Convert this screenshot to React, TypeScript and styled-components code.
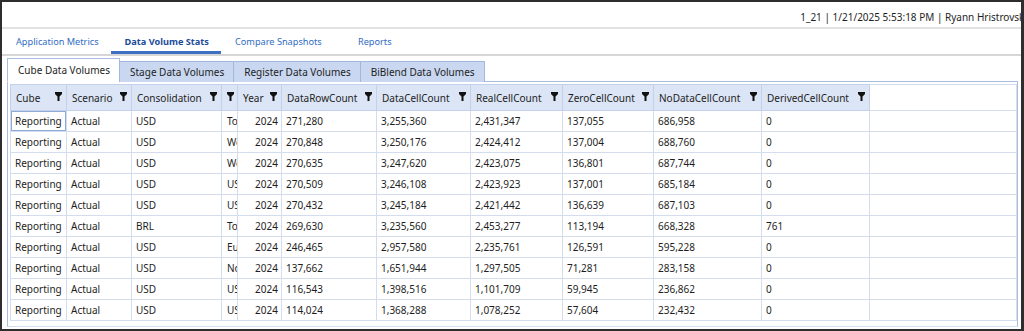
import React from 'react';
import styled, { createGlobalStyle } from 'styled-components';

const GlobalStyle = createGlobalStyle`
  html, body {
    margin: 0;
    padding: 0;
    background: #ffffff;
  }
  body {
    font-family: 'Noto Sans', 'Open Sans', Arial, sans-serif;
    font-size: 10px;
    color: #1e1e1e;
  }
`;

type Row = string[];

const columns = [
  { name: 'Cube', width: 56 },
  { name: 'Scenario', width: 65 },
  { name: 'Consolidation', width: 90 },
  { name: '', width: 16 },
  { name: 'Year', width: 44 },
  { name: 'DataRowCount', width: 95 },
  { name: 'DataCellCount', width: 94 },
  { name: 'RealCellCount', width: 92 },
  { name: 'ZeroCellCount', width: 91 },
  { name: 'NoDataCellCount', width: 108 },
  { name: 'DerivedCellCount', width: 108 },
];

const rows: Row[] = [
  ['Reporting', 'Actual', 'USD', 'Total', '2024', '271,280', '3,255,360', '2,431,347', '137,055', '686,958', '0'],
  ['Reporting', 'Actual', 'USD', 'West', '2024', '270,848', '3,250,176', '2,424,412', '137,004', '688,760', '0'],
  ['Reporting', 'Actual', 'USD', 'West', '2024', '270,635', '3,247,620', '2,423,075', '136,801', '687,744', '0'],
  ['Reporting', 'Actual', 'USD', 'US', '2024', '270,509', '3,246,108', '2,423,923', '137,001', '685,184', '0'],
  ['Reporting', 'Actual', 'USD', 'US', '2024', '270,432', '3,245,184', '2,421,442', '136,639', '687,103', '0'],
  ['Reporting', 'Actual', 'BRL', 'Total', '2024', '269,630', '3,235,560', '2,453,277', '113,194', '668,328', '761'],
  ['Reporting', 'Actual', 'USD', 'Europe', '2024', '246,465', '2,957,580', '2,235,761', '126,591', '595,228', '0'],
  ['Reporting', 'Actual', 'USD', 'North', '2024', '137,662', '1,651,944', '1,297,505', '71,281', '283,158', '0'],
  ['Reporting', 'Actual', 'USD', 'US', '2024', '116,543', '1,398,516', '1,101,709', '59,945', '236,862', '0'],
  ['Reporting', 'Actual', 'USD', 'US', '2024', '114,024', '1,368,288', '1,078,252', '57,604', '232,432', '0'],
];

const navTabs = ['Application Metrics', 'Data Volume Stats', 'Compare Snapshots', 'Reports'];
const subTabs = ['Cube Data Volumes', 'Stage Data Volumes', 'Register Data Volumes', 'BiBlend Data Volumes'];

const FilterIcon = () => (
  <svg width="7" height="9" viewBox="0 0 7 9">
    <path d="M0 0 H7 V2 L4.5 4.5 V9 H2.5 V4.5 L0 2 Z" fill="#111" />
  </svg>
);

const App = () => {
  return (
    <>
      <GlobalStyle />
      <S.Frame>
        <S.TopBar>1_21 | 1/21/2025 5:53:18 PM | Ryann Hristrovski</S.TopBar>
        <S.NavBar>
          {navTabs.map((tab, i) => (
            <S.NavTab key={tab} active={i === 1}>
              {tab}
            </S.NavTab>
          ))}
        </S.NavBar>
        <S.SubTabStrip>
          {subTabs.map((tab, i) => (
            <S.SubTab key={tab} active={i === 0}>
              {tab}
            </S.SubTab>
          ))}
        </S.SubTabStrip>
        <S.Panel>
          <S.Grid>
            <colgroup>
              {columns.map((c, i) => (
                <S.Col key={i} w={c.width} />
              ))}
              <col />
            </colgroup>
            <thead>
              <tr>
                {columns.map((c, i) => (
                  <S.HeadCell key={i}>
                    <S.HeadInner>
                      <span>{c.name}</span>
                      <FilterIcon />
                    </S.HeadInner>
                  </S.HeadCell>
                ))}
                <S.FillerHead />
              </tr>
            </thead>
            <tbody>
              {rows.map((row, r) => (
                <tr key={r}>
                  {row.map((v, c) => (
                    <S.Cell key={c} right={c === 4} narrow={c === 3} selected={r === 0 && c === 0}>
                      {v}
                    </S.Cell>
                  ))}
                  <S.Cell />
                </tr>
              ))}
            </tbody>
          </S.Grid>
        </S.Panel>
      </S.Frame>
    </>
  );
};

export default App;

const S: any = {};

S.Frame = styled.div`
  box-sizing: border-box;
  width: 1024px;
  height: 331px;
  border: 2px solid #2e2e2e;
  border-right-width: 3px;
  display: flex;
  flex-direction: column;
  overflow: hidden;
  background: #fff;
`;

S.TopBar = styled.div`
  height: 27px;
  flex: none;
  display: flex;
  align-items: flex-end;
  justify-content: flex-end;
  padding-bottom: 3px;
  box-sizing: border-box;
  white-space: nowrap;
  margin-right: -6px;
  font-size: 10px;
  color: #1e1e1e;
  border-bottom: 2px solid #e2e2e2;
`;

S.NavBar = styled.div`
  height: 25px;
  flex: none;
  display: flex;
  border-bottom: 2px solid #d6d6d6;
`;

S.NavTab = styled.div<{ active?: boolean }>`
  box-sizing: border-box;
  min-width: 80px;
  padding: 2px 12px 0 14px;
  display: flex;
  align-items: center;
  justify-content: center;
  font-size: 9.2px;
  color: ${(p: any) => (p.active ? '#1d4c9a' : '#2f6cc4')};
  font-weight: ${(p: any) => (p.active ? 700 : 400)};
  border-bottom: 3px solid ${(p: any) => (p.active ? '#3d6fc3' : 'transparent')};
`;

S.SubTabStrip = styled.div`
  flex: none;
  display: flex;
  align-items: flex-end;
  height: 24px;
  margin-top: 2px;
  padding-left: 5px;
  position: relative;
  z-index: 1;
`;

S.SubTab = styled.div<{ active?: boolean }>`
  box-sizing: border-box;
  height: ${(p: any) => (p.active ? '24px' : '21px')};
  padding: 0 9px 0 10px;
  display: flex;
  align-items: center;
  font-size: 10px;
  color: #1e1e1e;
  background: ${(p: any) => (p.active ? '#ffffff' : '#c9d7f0')};
  border: 1px solid ${(p: any) => (p.active ? '#a9bde0' : '#a3b7dc')};
  border-bottom: ${(p: any) => (p.active ? '1px solid #ffffff' : 'none')};
  margin-left: ${(p: any) => (p.active ? '0' : '-1px')};
`;

S.Panel = styled.div`
  flex: 1;
  margin: -1px 3px 2px 5px;
  border: 1px solid #a9bde0;
  border-bottom-color: #d4ddee;
  padding: 2px 0 0 2px;
  overflow: hidden;
`;

S.Grid = styled.table`
  border-collapse: collapse;
  table-layout: fixed;
  width: 100%;
  border-top: 1px solid #b7c8e6;
  border-left: 1px solid #c3d1ea;
`;

S.Col = styled.col<{ w: number }>`
  width: ${(p: any) => p.w}px;
`;

S.HeadCell = styled.th`
  height: 25px;
  padding: 0 4px 0 5px;
  background: #dbe5f5;
  border: 1px solid #c3d1ea;
  font-weight: 400;
  text-align: left;
  white-space: nowrap;
  overflow: hidden;
`;

S.HeadInner = styled.div`
  display: flex;
  align-items: center;
  justify-content: space-between;
  svg {
    flex: none;
    margin-top: -2px;
  }
`;

S.FillerHead = styled.th`
  background: #fff;
  border: 1px solid #d4ddee;
  border-left-color: #c3d1ea;
`;

S.Cell = styled.td<{ right?: boolean; selected?: boolean; narrow?: boolean }>`
  height: 20px;
  padding: 0 ${(p: any) => (p.right ? '3px' : '0')} 0 ${(p: any) => (p.narrow ? '5px' : '4px')};
  border: 1px solid #d4ddee;
  text-align: ${(p: any) => (p.right ? 'right' : 'left')};
  white-space: nowrap;
  overflow: hidden;
  text-overflow: clip;
  box-shadow: ${(p: any) => (p.selected ? 'inset 0 0 0 1px #8fa9d6' : 'none')};
`;
